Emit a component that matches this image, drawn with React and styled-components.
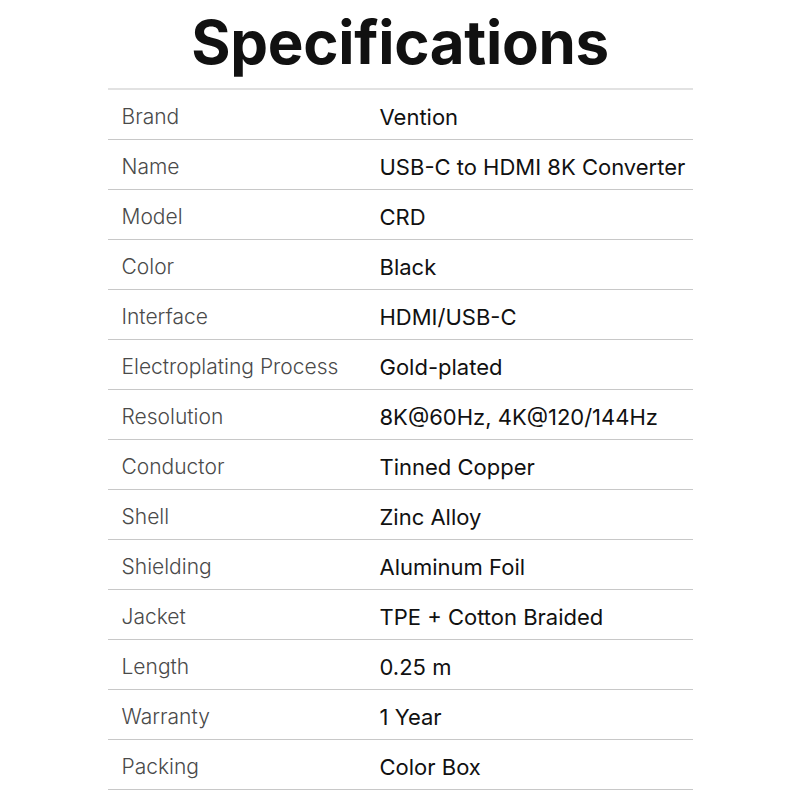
import React from 'react';
import styled, { createGlobalStyle } from 'styled-components';

const specs = [
    ['Brand', 'Vention'],
    ['Name', 'USB-C to HDMI 8K Converter'],
    ['Model', 'CRD'],
    ['Color', 'Black'],
    ['Interface', 'HDMI/USB-C'],
    ['Electroplating Process', 'Gold-plated'],
    ['Resolution', '8K@60Hz, 4K@120/144Hz'],
    ['Conductor', 'Tinned Copper'],
    ['Shell', 'Zinc Alloy'],
    ['Shielding', 'Aluminum Foil'],
    ['Jacket', 'TPE + Cotton Braided'],
    ['Length', '0.25 m'],
    ['Warranty', '1 Year'],
    ['Packing', 'Color Box'],
];

const GlobalStyle = createGlobalStyle`
    body {
        margin: 0;
        background: #fff;
        font-family: Inter, "Noto Sans", sans-serif;
    }
`;

const Page = styled.div`
    width: 800px;
    height: 800px;
    display: flex;
    flex-direction: column;
    align-items: center;
`;

const Title = styled.h1`
    margin: 0;
    height: 84px;
    padding-bottom: 4px;
    display: flex;
    align-items: center;
    justify-content: center;
    font-size: 60px;
    font-weight: 700;
    letter-spacing: -0.3px;
    color: #111;
`;

const Table = styled.div`
    width: 585px;
    border-top: 2px solid #e2e2e2;
`;

const Row = styled.div`
    display: grid;
    grid-template-columns: 258px 1fr;
    align-items: center;
    padding: 4px 0 0 14px;
    box-sizing: border-box;
    height: 50px;
    border-bottom: 1px solid #c8c8c8;
`;

const Label = styled.div`
    font-size: 21px;
    font-weight: 300;
    color: #4a4a4a;
`;

const Value = styled.div`
    font-size: 22px;
    font-weight: 400;
    color: #111;
`;

export default function App() {
    return (
        <Page>
            <GlobalStyle />
            <Title>Specifications</Title>
            <Table>
                {specs.map(([label, value]) => (
                    <Row key={label}>
                        <Label>{label}</Label>
                        <Value>{value}</Value>
                    </Row>
                ))}
            </Table>
        </Page>
    );
}
